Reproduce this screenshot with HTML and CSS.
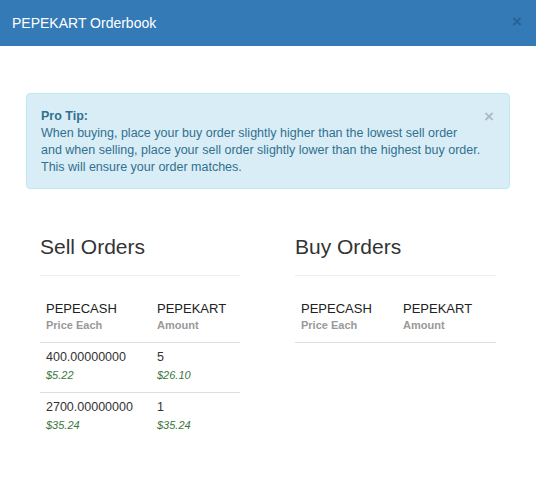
FILE: index.html
```html
<!DOCTYPE html>
<html lang="en">
<head>
    <meta charset="UTF-8">
    <meta name="viewport" content="width=device-width, initial-scale=1.0">
    <title>PEPEKART Orderbook</title>
    <link rel="stylesheet" href="styles.css">
</head>
<body>
    <div class="modal">
        <div class="modal-header">
            <h4 class="modal-title">PEPEKART Orderbook</h4>
            <span class="close header-close">&times;</span>
        </div>

        <div class="modal-body">
            <div class="alert">
                <span class="close alert-close">&times;</span>
                <strong>Pro Tip:</strong><br>
                When buying, place your buy order slightly higher than the lowest sell order<br>
                and when selling, place your sell order slightly lower than the highest buy order.<br>
                This will ensure your order matches.
            </div>

            <div class="orders">
                <div class="order-col sell">
                    <h3>Sell Orders</h3>
                    <hr>
                    <table class="order-table">
                        <thead>
                            <tr>
                                <th>PEPECASH<small>Price Each</small></th>
                                <th>PEPEKART<small>Amount</small></th>
                            </tr>
                        </thead>
                        <tbody>
                            <tr>
                                <td>400.00000000<em>$5.22</em></td>
                                <td>5<em>$26.10</em></td>
                            </tr>
                            <tr>
                                <td>2700.00000000<em>$35.24</em></td>
                                <td>1<em>$35.24</em></td>
                            </tr>
                        </tbody>
                    </table>
                </div>

                <div class="order-col buy">
                    <h3>Buy Orders</h3>
                    <hr>
                    <table class="order-table">
                        <thead>
                            <tr>
                                <th>PEPECASH<small>Price Each</small></th>
                                <th>PEPEKART<small>Amount</small></th>
                            </tr>
                        </thead>
                        <tbody>
                        </tbody>
                    </table>
                </div>
            </div>
        </div>
    </div>
</body>
</html>
```
FILE: styles.css
```css
body {
    font-family: "Liberation Sans", Arial, sans-serif;
    font-size: 12.5px;
    color: #333;
    margin: 0;
    background-color: #fff;
}
.modal {
    width: 536px;
    height: 480px;
    background-color: #fff;
}
.modal-header {
    display: flex;
    justify-content: space-between;
    align-items: center;
    height: 46px;
    padding: 0 12px;
    background-color: #337ab7;
    color: #fff;
}
.modal-title {
    margin: 0;
    font-size: 14px;
    font-weight: normal;
}
.close {
    font-weight: bold;
    line-height: 1;
    color: #000;
    opacity: .2;
}
.header-close {
    font-size: 17px;
    margin-top: -4px;
    margin-right: 2px;
}
.modal-body {
    padding: 47px 26px 0;
}
.alert {
    position: relative;
    padding: 14px 14px 12px;
    border: 1px solid #bce8f1;
    border-radius: 4px;
    background-color: #d9edf7;
    color: #31708f;
    line-height: 17px;
}
.alert-close {
    position: absolute;
    top: 14px;
    right: 15px;
    font-size: 17px;
}
.orders {
    display: grid;
    grid-template-columns: 200px 201px;
    column-gap: 55px;
    padding: 0 14px;
    margin-top: 46px;
}
.order-col h3 {
    margin: 0;
    font-size: 21px;
    font-weight: normal;
    line-height: 23px;
}
.order-col hr {
    margin: 17px 0 18px;
    border: 0;
    border-top: 1px solid #eee;
}
.order-table {
    width: 100%;
    border-collapse: collapse;
}
.order-table th {
    padding: 6px 6px 8px;
    text-align: left;
    font-size: 13px;
    font-weight: normal;
    line-height: 17px;
    color: #222;
    border-bottom: 1px solid #ddd;
}
.sell .order-table th:first-child {
    width: 99px;
}
.buy .order-table th:first-child {
    width: 90px;
}
.order-table th small {
    display: block;
    font-size: 11px;
    font-weight: bold;
    color: #999;
    line-height: 17px;
}
.order-table td {
    padding: 6px 6px 8px;
    line-height: 17px;
    border-bottom: 1px solid #ddd;
}
.order-table tbody tr:last-child td {
    border-bottom: none;
}
.order-table td em {
    display: block;
    font-size: 11px;
    color: #3c763d;
    line-height: 18px;
}
```
